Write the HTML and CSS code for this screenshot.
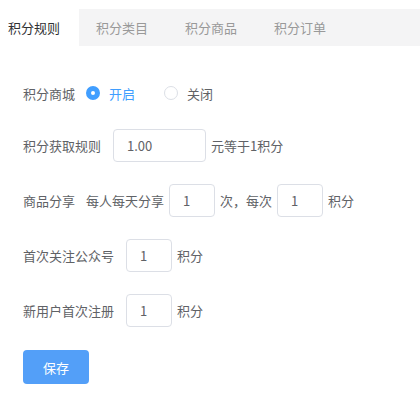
FILE: index.html
```html
<!DOCTYPE html>
<html lang="zh-CN">
<head>
    <meta charset="UTF-8">
    <meta name="viewport" content="width=device-width, initial-scale=1.0">
    <title>积分规则</title>
    <link rel="stylesheet" href="styles.css">
</head>
<body>
    <div class="tabs">
        <div class="tab active">积分规则</div>
        <div class="tab">积分类目</div>
        <div class="tab">积分商品</div>
        <div class="tab">积分订单</div>
    </div>

    <form class="rule-form">
        <div class="row">
            <span class="label">积分商城</span>
            <label class="radio checked"><span class="dot"></span>开启</label>
            <label class="radio"><span class="dot"></span>关闭</label>
        </div>
        <div class="row">
            <span class="label">积分获取规则</span>
            <input class="input wide" type="text" value="1.00">
            <span class="text">元等于1积分</span>
        </div>
        <div class="row">
            <span class="label">商品分享</span>
            <span class="text sub">每人每天分享</span>
            <input class="input" type="text" value="1">
            <span class="text">次，每次</span>
            <input class="input" type="text" value="1">
            <span class="text">积分</span>
        </div>
        <div class="row">
            <span class="label long">首次关注公众号</span>
            <input class="input" type="text" value="1">
            <span class="text">积分</span>
        </div>
        <div class="row">
            <span class="label long">新用户首次注册</span>
            <input class="input" type="text" value="1">
            <span class="text">积分</span>
        </div>
        <button type="button" class="save">保存</button>
    </form>
</body>
</html>
```

FILE: styles.css
```css
* {
    margin: 0;
    padding: 0;
    box-sizing: border-box;
}

body {
    font-family: "Noto Sans CJK SC", "Noto Sans", sans-serif;
    font-size: 13px;
    color: #606266;
    background: #fff;
    padding-top: 9px;
}

.tabs {
    display: flex;
    height: 37px;
    background: #f4f4f5;
}

.tab {
    width: 89px;
    line-height: 37px;
    padding-left: 17px;
    color: #999;
}

.tab.active {
    width: 79px;
    padding-left: 8px;
    background: #fff;
    color: #303133;
}

.rule-form {
    padding: 38px 22px 0 23px;
}

.row {
    display: flex;
    align-items: center;
    height: 33px;
    margin-bottom: 22px;
}

.row:first-child {
    height: 18px;
    margin-bottom: 27px;
}

.label {
    width: 90px;
}

.label.long {
    width: 103px;
}

.text {
    margin: 0 5px;
}

.text.sub {
    margin: 0 5px 0 -27px;
}

.radio {
    display: flex;
    align-items: center;
    margin-left: -27px;
    margin-right: 29px;
    color: #606266;
}

.radio + .radio {
    margin-left: 0;
}

.radio .dot {
    width: 14px;
    height: 14px;
    border: 1px solid #dcdfe6;
    border-radius: 50%;
    margin-right: 9px;
    background: #fff;
}

.radio.checked {
    color: #409eff;
}

.radio.checked .dot {
    border: 5px solid #409eff;
}

.input {
    width: 46px;
    height: 33px;
    border: 1px solid #dcdfe6;
    border-radius: 4px;
    padding: 0 13px;
    font-family: inherit;
    font-size: 13px;
    color: #606266;
    outline: none;
}

.input.wide {
    width: 93px;
}

.save {
    width: 66px;
    height: 34px;
    margin-top: 1px;
    border: none;
    border-radius: 4px;
    background: #539ff8;
    color: #fff;
    font-family: inherit;
    font-size: 13px;
    cursor: pointer;
}
```
